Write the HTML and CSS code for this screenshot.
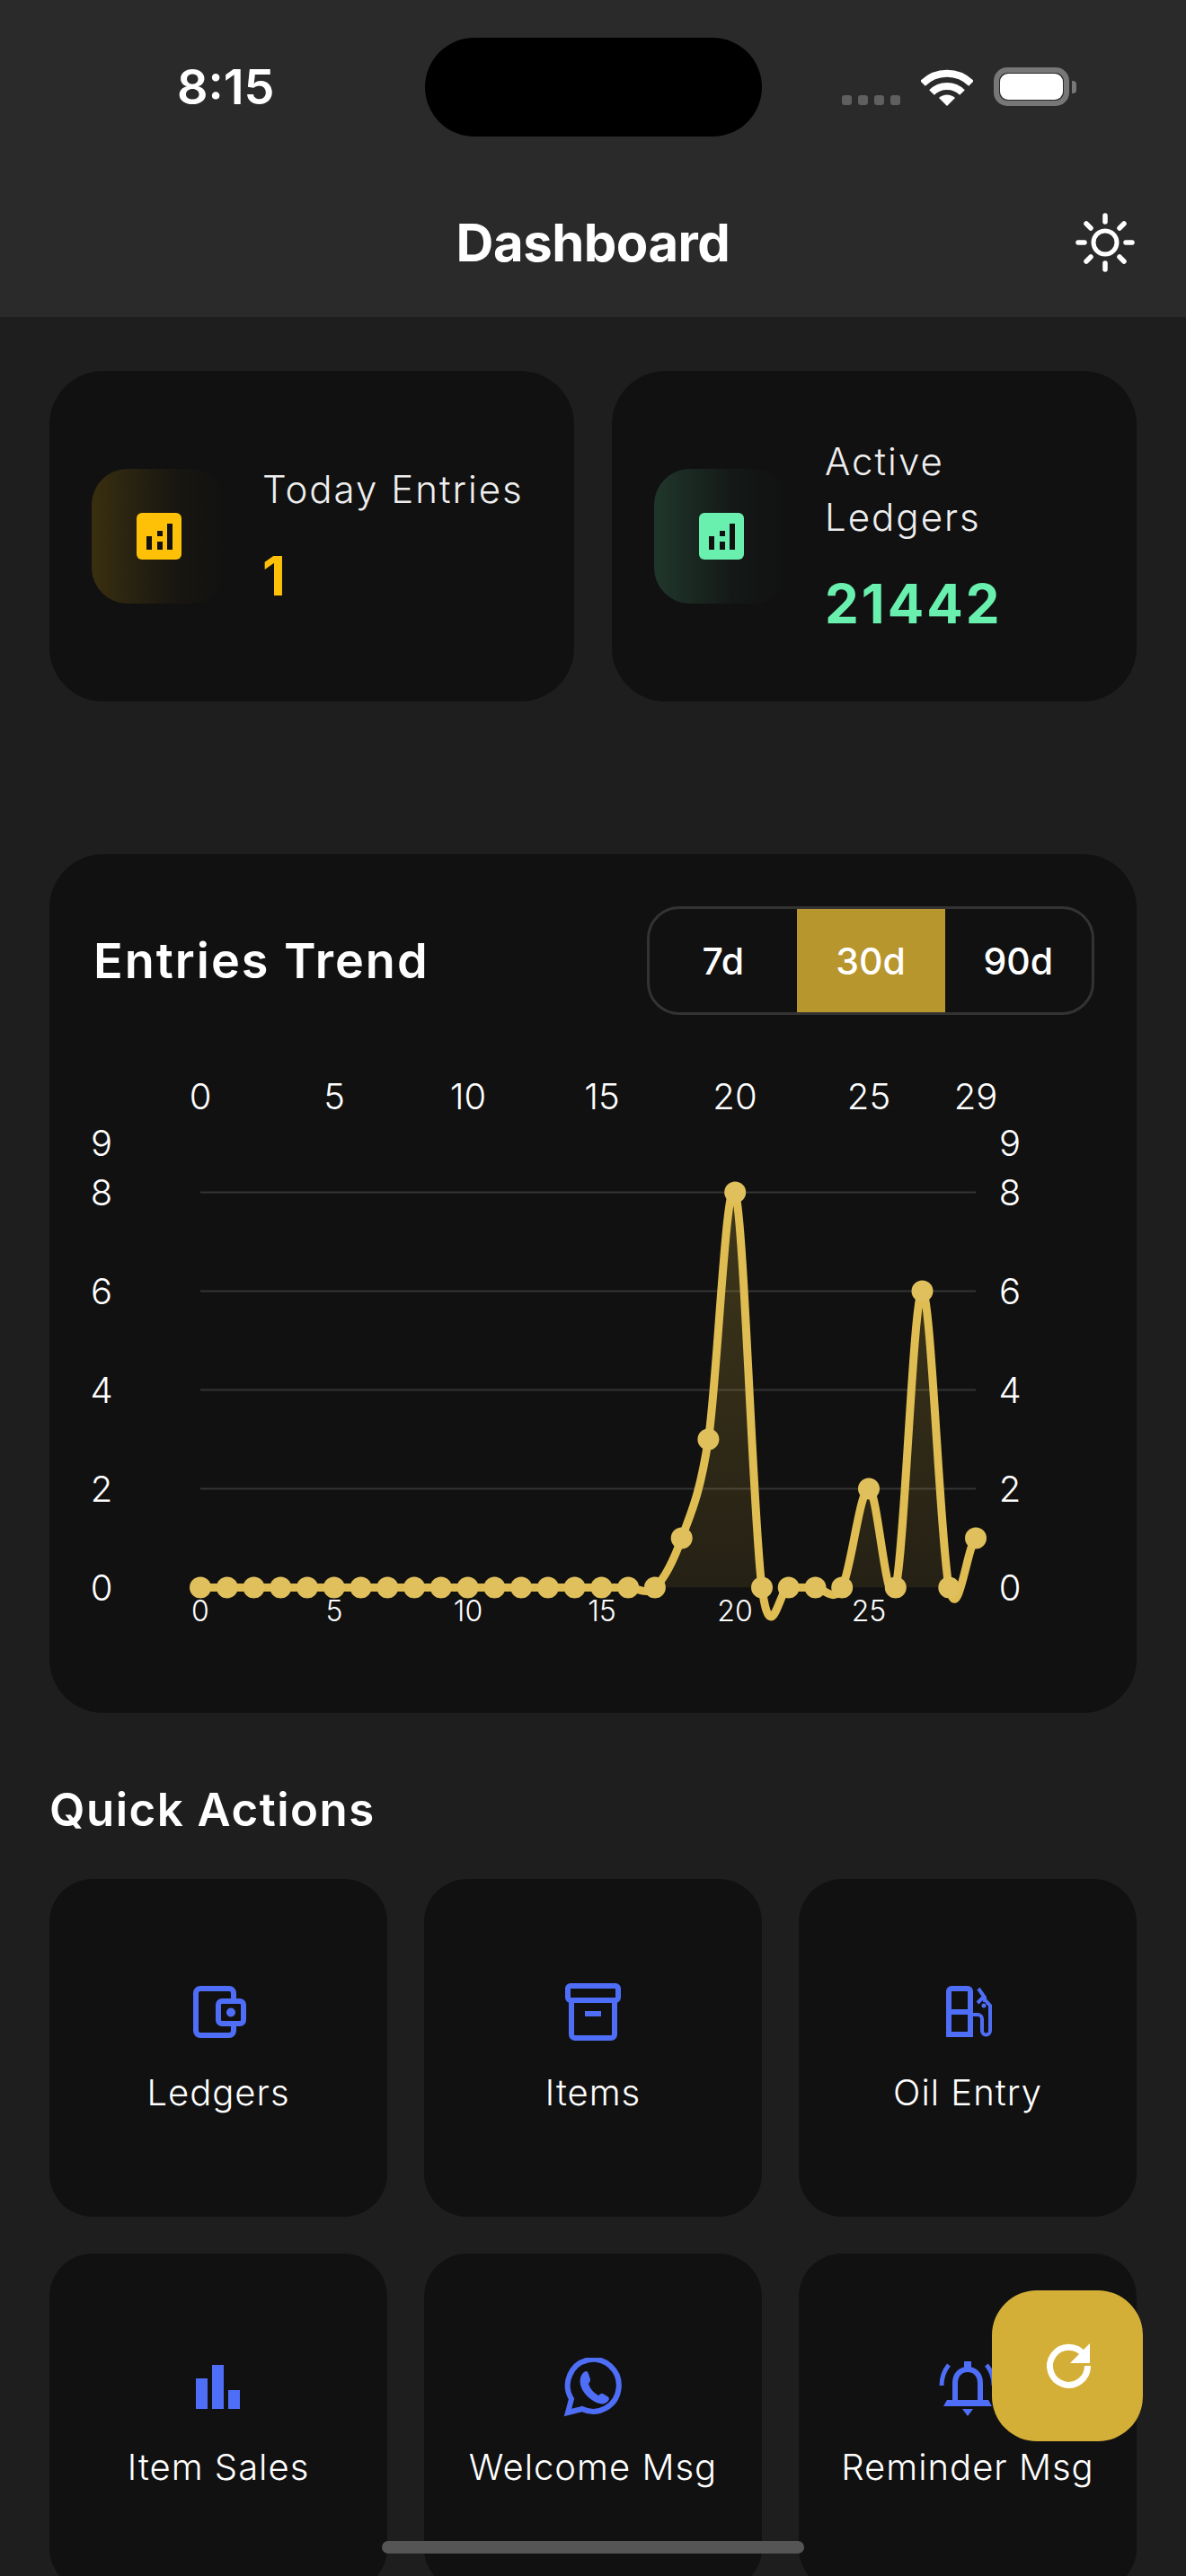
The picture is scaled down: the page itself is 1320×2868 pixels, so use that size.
FILE: index.html
```html
<!DOCTYPE html>
<html lang="en">
<head>
<meta charset="utf-8">
<title>Dashboard</title>
<link rel="stylesheet" href="styles.css">
</head>
<body>
<div class="page">
  <header class="header">
    <div class="status">
      <span class="time">8:15</span>
      <span class="island"></span>
      <div class="status-icons">
        <span class="sig"><i></i><i></i><i></i><i></i></span>
        <svg class="wifi" viewBox="0 0 58 42"><path class="wifi-a" d="M2 17 A38 38 0 0 1 56 17"/><path class="wifi-a" d="M12 27 A24 24 0 0 1 46 27"/><path class="wifi-f" d="M20 33 A13 13 0 0 1 38 33 L29 42 Z"/></svg>
        <span class="battery"><span class="battery-fill"></span></span>
        <span class="nub"></span>
      </div>
    </div>
    <div class="titlebar">
      <h1 class="title">Dashboard</h1>
      <svg class="sun" viewBox="0 0 66 66">
        <circle class="sun-ring" cx="33" cy="33" r="13"/>
        <path class="sun-ray" d="M33 3V10M33 56V63M3 33H10M56 33H63M12 12L17 17M49 49L54 54M12 54L17 49M49 17L54 12"/>
      </svg>
    </div>
  </header>

  <main class="content">
    <section class="stats">
      <div class="stat-card">
        <div class="stat-icon amber-bg">
          <svg class="stat-glyph" viewBox="0 0 50 52"><rect class="fill-amber" width="50" height="52" rx="6"/><path class="bar-dark" d="M11 26h6v15h-6zM23 20h6v6h-6zM23 32h6v9h-6zM34 12h6v29h-6z"/></svg>
        </div>
        <div class="stat-text">
          <div class="stat-label">Today Entries</div>
          <div class="stat-value amber">1</div>
        </div>
      </div>
      <div class="stat-card">
        <div class="stat-icon green-bg">
          <svg class="stat-glyph" viewBox="0 0 50 52"><rect class="fill-green" width="50" height="52" rx="6"/><path class="bar-dark" d="M11 26h6v15h-6zM23 20h6v6h-6zM23 32h6v9h-6zM34 12h6v29h-6z"/></svg>
        </div>
        <div class="stat-text">
          <div class="stat-label">Active<br>Ledgers</div>
          <div class="stat-value green">21442</div>
        </div>
      </div>
    </section>

    <section class="chart-card">
      <div class="chart-head">
        <h2 class="chart-title">Entries Trend</h2>
        <div class="toggle">
          <span class="toggle-item">7d</span>
          <span class="toggle-item active">30d</span>
          <span class="toggle-item">90d</span>
        </div>
      </div>
      <svg class="chart" viewBox="55 1190 1210 640">
        <defs>
          <clipPath id="above"><rect x="55" y="1190" width="1210" height="577.500"/></clipPath>
          <linearGradient id="areaFade" gradientUnits="userSpaceOnUse" x1="0" y1="1327" x2="0" y2="1767">
            <stop class="stop-top" offset="0"/>
            <stop class="stop-bottom" offset="1"/>
          </linearGradient>
        </defs>
        <g class="ax-top">
          <text x="223" y="1220">0</text><text x="372" y="1220">5</text><text x="521" y="1220">10</text><text x="670" y="1220">15</text><text x="818" y="1220">20</text><text x="967" y="1220">25</text><text x="1086" y="1220">29</text>
        </g>
        <g class="ax-side">
          <text x="113" y="1272">9</text><text x="113" y="1327">8</text><text x="113" y="1437">6</text><text x="113" y="1547">4</text><text x="113" y="1657">2</text><text x="113" y="1767">0</text>
          <text x="1124" y="1272">9</text><text x="1124" y="1327">8</text><text x="1124" y="1437">6</text><text x="1124" y="1547">4</text><text x="1124" y="1657">2</text><text x="1124" y="1767">0</text>
        </g>
        <path class="grid" d="M223 1327.5H1086M223 1437.5H1086M223 1547.5H1086M223 1657.5H1086"/>
        <path class="area" clip-path="url(#above)" d="M728.9 1767.5C738.8 1758.3 748.8 1740 758.7 1712.5C768.6 1685 778.5 1666.7 788.4 1602.5C798.3 1538.3 808.3 1300 818.2 1327.5C828.1 1355 838.1 1694 848 1767.5ZM937.2 1767.5C947.1 1749.2 957.1 1657.5 967 1657.5C976.9 1657.5 986.9 1804.2 996.8 1767.5C1006.7 1730.8 1016.6 1437.5 1026.5 1437.5C1036.4 1437.5 1046.4 1721.7 1056.3 1767.5Z"/>
        <path class="line" d="M223 1767.5H699.2C709.1 1767.5 719 1776.7 728.9 1767.5C738.8 1758.3 748.8 1740 758.7 1712.5C768.6 1685 778.5 1666.7 788.4 1602.5C798.3 1538.3 808.3 1300 818.2 1327.5C828.1 1355 838.1 1694 848 1767.5C857.9 1840.8 867.8 1767.5 877.7 1767.5H907.5C917.4 1767.5 927.3 1785.8 937.2 1767.5C947.1 1749.2 957.1 1657.5 967 1657.5C976.9 1657.5 986.9 1804.2 996.8 1767.5C1006.7 1730.8 1016.6 1437.5 1026.5 1437.5C1036.4 1437.5 1046.4 1721.7 1056.3 1767.5C1066.2 1813.3 1076.1 1721.7 1086 1712.5"/>
        <g class="dots">
          <circle cx="223" cy="1767.5" r="12"/><circle cx="252.8" cy="1767.5" r="12"/><circle cx="282.5" cy="1767.5" r="12"/><circle cx="312.3" cy="1767.5" r="12"/><circle cx="342" cy="1767.5" r="12"/><circle cx="371.8" cy="1767.5" r="12"/><circle cx="401.6" cy="1767.5" r="12"/><circle cx="431.3" cy="1767.5" r="12"/><circle cx="461.1" cy="1767.5" r="12"/><circle cx="490.8" cy="1767.5" r="12"/><circle cx="520.6" cy="1767.5" r="12"/><circle cx="550.4" cy="1767.5" r="12"/><circle cx="580.1" cy="1767.5" r="12"/><circle cx="609.9" cy="1767.5" r="12"/><circle cx="639.6" cy="1767.5" r="12"/><circle cx="669.4" cy="1767.5" r="12"/><circle cx="699.2" cy="1767.5" r="12"/><circle cx="728.9" cy="1767.5" r="12"/><circle cx="758.7" cy="1712.5" r="12"/><circle cx="788.4" cy="1602.5" r="12"/><circle cx="818.2" cy="1327.5" r="12"/><circle cx="848" cy="1767.5" r="12"/><circle cx="877.7" cy="1767.5" r="12"/><circle cx="907.5" cy="1767.5" r="12"/><circle cx="937.2" cy="1767.5" r="12"/><circle cx="967" cy="1657.5" r="12"/><circle cx="996.8" cy="1767.5" r="12"/><circle cx="1026.5" cy="1437.5" r="12"/><circle cx="1056.3" cy="1767.5" r="12"/><circle cx="1086" cy="1712.5" r="12"/>
        </g>
        <g class="ax-bottom">
          <text x="223" y="1793">0</text><text x="372" y="1793">5</text><text x="521" y="1793">10</text><text x="670" y="1793">15</text><text x="818" y="1793">20</text><text x="967" y="1793">25</text>
        </g>
      </svg>
    </section>

    <h2 class="section-title">Quick Actions</h2>
    <section class="actions">
      <div class="action">
        <svg class="action-icon" viewBox="0 0 66 66">
          <path class="ic" d="M50 18V11a5 5 0 0 0-5-5H13a5 5 0 0 0-5 5v42a5 5 0 0 0 5 5h32a5 5 0 0 0 5-5v-8"/>
          <rect class="ic" x="33" y="20" width="28" height="25" rx="4"/>
          <circle class="ic-f" cx="47" cy="32.500" r="5"/>
        </svg>
        <span class="action-label">Ledgers</span>
      </div>
      <div class="action">
        <svg class="action-icon" viewBox="0 0 66 66">
          <rect class="ic" x="5" y="3" width="56" height="16" rx="3"/>
          <path class="ic" d="M9 19V57a4 4 0 0 0 4 4H53a4 4 0 0 0 4-4V19"/>
          <path class="ic-f" d="M24 31H42V37H24Z"/>
        </svg>
        <span class="action-label">Items</span>
      </div>
      <div class="action">
        <svg class="action-icon" viewBox="0 0 66 66">
          <path class="ic" d="M12 57V9a3 3 0 0 1 3-3H33a3 3 0 0 1 3 3V57ZM12 32H36"/>
          <path class="ic-f" d="M9 55H38V60H9Z"/>
          <path class="ic-thin" d="M45 6L52 16V21M44 22L50 16L58 25V53A4.500 4.500 0 0 1 49 53V40A5 5 0 0 0 44 35H37"/>
          <circle class="ic-f" cx="51" cy="25" r="2.500"/>
        </svg>
        <span class="action-label">Oil Entry</span>
      </div>
      <div class="action">
        <svg class="action-icon" viewBox="0 0 66 66">
          <path class="ic-f" d="M8 23H21V57H8ZM26 8H39V57H26ZM44 36H57V57H44Z"/>
        </svg>
        <span class="action-label">Item Sales</span>
      </div>
      <div class="action">
        <svg class="action-icon" viewBox="0 0 66 66">
          <path class="ic" d="M5 61L9 46A28.500 29 0 1 1 21 57Z"/>
          <path class="ic-f" d="M23 16C26 14 27 15 28 18L30 24C30.500 26 29 27 28 29C30 35 34 39 39 42C41 41 42 39 44 40L49 43C51 44 52 46 49 49C46 52 42 52 37 50C28 46 21 38 19 30C18 25 19 19 23 16Z"/>
        </svg>
        <span class="action-label">Welcome Msg</span>
      </div>
      <div class="action">
        <svg class="action-icon" viewBox="0 0 66 66">
          <path class="ic" d="M19 47V28C19 19 25 13 33 13C41 13 47 19 47 28V47"/>
          <path class="ic-f" d="M10 47H56L60 54H6ZM29 4H37V12H29ZM27 57H39L33 65Z"/>
          <path class="ic-wing" d="M4 31C4 22 7 14 12 8M62 31C62 22 59 14 54 8"/>
        </svg>
        <span class="action-label">Reminder Msg</span>
      </div>
    </section>
  </main>

  <button class="fab" type="button" aria-label="Refresh">
    <svg class="fab-icon" viewBox="0 0 56 56">
      <path class="fab-arc" d="M46.500 16A21 21 0 1 0 50.500 28"/>
      <path class="fab-head" d="M53 3V25H31Z"/>
    </svg>
  </button>
  <div class="home"></div>
</div>
</body>
</html>
```

FILE: styles.css
```css
* { box-sizing: border-box; }
html, body { margin: 0; padding: 0; background: #1e1e1e; }
body { font-family: Inter, "Liberation Sans", sans-serif; color: #fff; }
.page { position: relative; width: 1320px; height: 2868px; overflow: hidden; background: #1e1e1e; }

.header { height: 353px; background: #2a2a2a; display: flex; flex-direction: column; }
.status { height: 194px; position: relative; padding-top: 42px; display: flex; justify-content: center; }
.time { position: absolute; left: 197px; top: 68px; font-size: 54px; line-height: 58px; font-weight: 600; }
.island { width: 375px; height: 110px; border-radius: 55px; background: #000; }
.status-icons { position: absolute; left: 937px; top: 75px; height: 43px; display: flex; align-items: flex-end; }
.sig { display: flex; gap: 7px; margin-right: 23px; padding-bottom: 1px; }
.sig i { width: 11px; height: 11px; border-radius: 3px; background: #5f5f5f; }
.wifi { width: 58px; height: 42px; margin-right: 23px; display: block; }
.wifi-a { fill: none; stroke: #fff; stroke-width: 8; }
.wifi-f { fill: #fff; }
.battery { width: 84px; height: 43px; border: 6px solid #777; border-radius: 15px; padding: 1px; display: flex; }
.battery-fill { flex: 1; background: #fff; border-radius: 9px; }
.nub { width: 5px; height: 14px; margin: 0 0 14px 3px; background: #777; border-radius: 0 4px 4px 0; }

.titlebar { flex: 1; position: relative; display: flex; justify-content: center; align-items: flex-start; }
.title { margin: 38px 0 0; font-size: 58px; line-height: 76px; font-weight: 700; letter-spacing: -0.5px; }
.sun { position: absolute; left: 1197px; top: 43px; width: 66px; height: 66px; }
.sun-ring { fill: none; stroke: #fff; stroke-width: 5; }
.sun-ray { fill: none; stroke: #fff; stroke-width: 5.500; stroke-linecap: round; }

.content { padding: 60px 55px 0; }
.stats { display: grid; grid-template-columns: 584px 584px; gap: 42px; margin-bottom: 170px; }
.stat-card { height: 368px; background: #111; border-radius: 60px; padding-left: 47px; display: flex; align-items: center; gap: 40px; }
.stat-icon { width: 150px; height: 150px; border-radius: 40px; display: flex; align-items: center; justify-content: center; flex: none; }
.amber-bg { background: linear-gradient(90deg, rgba(255,193,7,.17), rgba(255,193,7,.03) 60%, rgba(255,193,7,0)); }
.green-bg { background: linear-gradient(90deg, rgba(105,240,174,.17), rgba(105,240,174,.03) 60%, rgba(105,240,174,0)); }
.stat-glyph { width: 50px; height: 52px; display: block; }
.fill-amber { fill: #ffc107; }
.fill-green { fill: #69f0ae; }
.bar-dark { fill: #111; }
.stat-text { display: flex; flex-direction: column; }
.stat-label { font-size: 42px; line-height: 62px; font-weight: 300; letter-spacing: 2px; color: #eee; }
.stat-value { margin-top: 26px; font-size: 60px; line-height: 78px; font-weight: 700; letter-spacing: 3px; }
.amber { color: #ffc107; }
.green { color: #69f0ae; }

.chart-card { height: 956px; background: #111; border-radius: 60px; }
.chart-head { padding: 58px 47px 0 49px; display: flex; justify-content: space-between; align-items: center; }
.chart-title { margin: 0; font-size: 54px; line-height: 121px; font-weight: 600; letter-spacing: 2px; }
.toggle { width: 498px; height: 121px; border: 3px solid #333; border-radius: 36px; display: grid; grid-template-columns: 1fr 165px 1fr; overflow: hidden; }
.toggle-item { display: flex; align-items: center; justify-content: center; font-size: 41px; font-weight: 500; }
.toggle-item.active { background: #b8962e; }
.chart { display: block; width: 1210px; height: 640px; margin-top: 60px; overflow: visible; }
.chart text { fill: #fff; text-anchor: middle; dominant-baseline: central; font-weight: 300; }
.ax-top text, .ax-side text { font-size: 40px; }
.ax-bottom text { font-size: 32px; }
.grid { stroke: #343434; stroke-width: 2; fill: none; }
.area { fill: url(#areaFade); }
.stop-top { stop-color: #d4af37; stop-opacity: .24; }
.stop-bottom { stop-color: #d4af37; stop-opacity: .1; }
.line { fill: none; stroke: #dfbd52; stroke-width: 9; stroke-linejoin: round; }
.dots circle { fill: #e0c05c; }

.section-title { margin: 78px 0 0; font-size: 51px; line-height: 60px; font-weight: 600; letter-spacing: 1.500px; }
.actions { margin-top: 47px; display: grid; grid-template-columns: repeat(3, 376px); column-gap: 41px; row-gap: 41px; }
.action { height: 376px; background: #111; border-radius: 48px; display: flex; flex-direction: column; align-items: center; padding-top: 116px; }
.action-icon { width: 66px; height: 66px; display: block; }
.action-label { margin-top: 31px; font-size: 40px; line-height: 50px; font-weight: 300; letter-spacing: 1px; white-space: nowrap; }
.ic { fill: none; stroke: #4f6ef7; stroke-width: 6; }
.ic-f { fill: #4f6ef7; }
.ic-thin { fill: none; stroke: #4f6ef7; stroke-width: 4; }
.ic-wing { fill: none; stroke: #4f6ef7; stroke-width: 5; }

.fab { position: absolute; left: 1104px; top: 2550px; width: 168px; height: 168px; border: 0; padding: 0; border-radius: 50px; background: #d4af37; display: flex; align-items: center; justify-content: center; }
.fab-icon { width: 56px; height: 56px; display: block; }
.fab-arc { fill: none; stroke: #fff; stroke-width: 7; }
.fab-head { fill: #fff; }
.home { position: absolute; left: 425px; top: 2829px; width: 470px; height: 14px; border-radius: 7px; background: #555; }
```
